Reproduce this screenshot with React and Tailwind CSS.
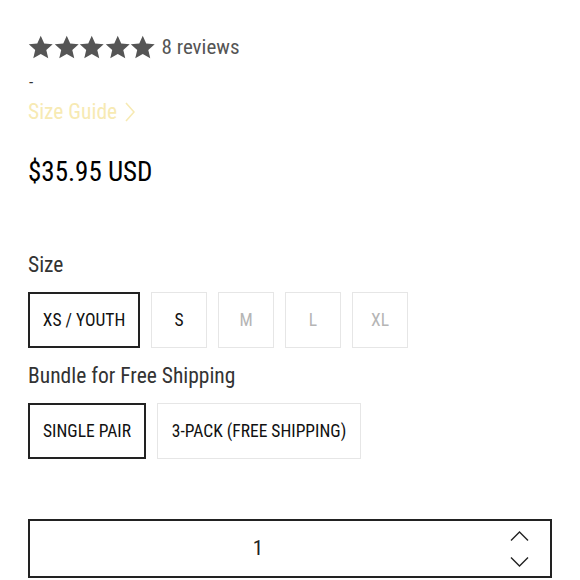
const font = { fontFamily: '"Roboto Condensed", "Liberation Sans Narrow", Roboto, sans-serif' };

function Star() {
  return (
    <svg width="25.5" height="25" viewBox="0.5 0.5 23 23" className="shrink-0">
      <path
        fill="#555555"
        d="M12 1.2l3.2 7.2 7.8.7-5.9 5.2 1.8 7.7L12 18l-6.9 4 1.8-7.7-5.9-5.2 7.8-.7z"
      />
    </svg>
  );
}

function Chevron({ dir }) {
  return (
    <svg width="19" height="10" viewBox="0 0 19 10" fill="none" stroke="#222" strokeWidth="1.4">
      {dir === "up" ? <polyline points="1,9.5 9.5,1 18,9.5" /> : <polyline points="1,0.5 9.5,9 18,0.5" />}
    </svg>
  );
}

const sizes = [
  { label: "XS / YOUTH", w: "w-[112px]", active: true, available: true },
  { label: "S", w: "w-[56px]", available: true },
  { label: "M", w: "w-[56px]" },
  { label: "L", w: "w-[56px]" },
  { label: "XL", w: "w-[56px]" },
];

export default function App() {
  return (
    <div className="w-[580px] h-[580px] bg-white overflow-hidden pl-[28px] pt-[34px]" style={font}>
      {/* Rating */}
      <div className="flex items-center h-[26px]">
        <div className="flex items-center">
          {[0, 1, 2, 3, 4].map((i) => (
            <Star key={i} />
          ))}
        </div>
        <span className="ml-[6px] text-[21px] leading-[26px] text-[#555]">8 reviews</span>
      </div>
      <div className="text-[17px] leading-[20px] text-[#333] mt-[12px] pl-[1px]">-</div>
      <div className="flex items-center mt-[7px] text-[21.5px] leading-[26px] text-[#f7eab3]">
        <span>Size Guide</span>
        <svg width="10" height="20" viewBox="0 0 10 20" fill="none" stroke="#f7eab3" strokeWidth="1.6" className="ml-[8px]">
          <polyline points="1,1 9,10 1,19" />
        </svg>
      </div>

      {/* Price */}
      <div className="mt-[31px] text-[27px] leading-[32px] text-black">$35.95 USD</div>

      {/* Size */}
      <div className="mt-[64px] text-[21.5px] leading-[26px] text-[#333]">Size</div>
      <div className="flex gap-[11px] mt-[14px]">
        {sizes.map((s) => (
          <div
            key={s.label}
            className={`${s.w} h-[56px] flex items-center justify-center text-[17.5px] ${
              s.active ? "border-2 border-[#222]" : "border border-[#e6e6e6]"
            } ${s.available ? "text-[#111]" : "text-[#b5b5b5]"}`}
          >
            {s.label}
          </div>
        ))}
      </div>

      {/* Bundle */}
      <div className="mt-[15px] text-[21.5px] leading-[26px] text-[#333]">Bundle for Free Shipping</div>
      <div className="flex gap-[11px] mt-[14px]">
        <div className="w-[118px] h-[56px] border-2 border-[#222] flex items-center justify-center text-[17.5px] text-[#111]">
          SINGLE PAIR
        </div>
        <div className="w-[204px] h-[56px] border border-[#e6e6e6] flex items-center justify-center text-[17.5px] text-[#111]">
          3-PACK (FREE SHIPPING)
        </div>
      </div>

      {/* Quantity */}
      <div className="mt-[60px] w-[524px] h-[59px] border-2 border-[#222] flex items-center">
        <div className="flex-1 text-center text-[21px] text-[#222] pr-[2px]">1</div>
        <div className="w-[62px] flex flex-col items-center gap-[16px]">
          <Chevron dir="up" />
          <Chevron dir="down" />
        </div>
      </div>
    </div>
  );
}
